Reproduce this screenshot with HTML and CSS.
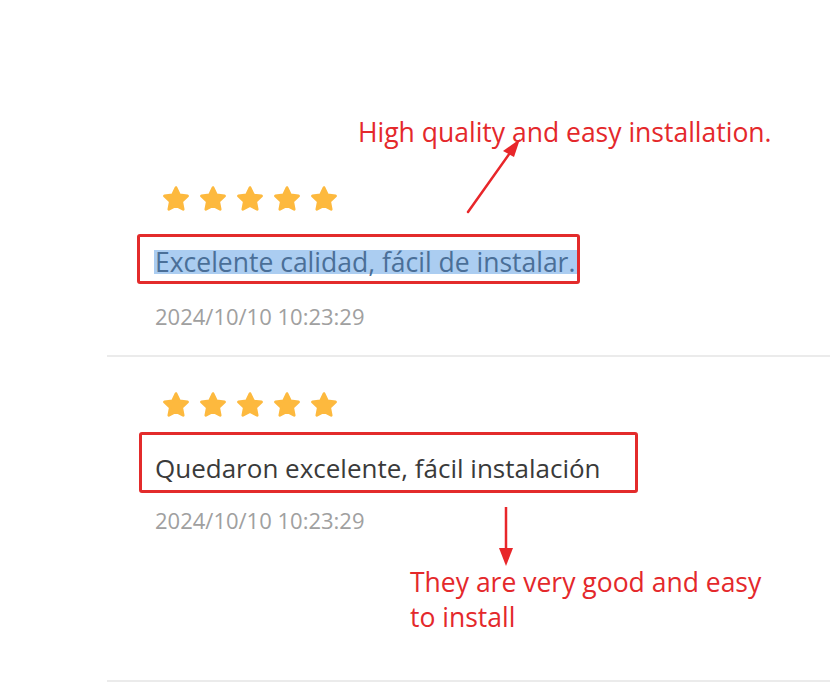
FILE: index.html
```html
<!DOCTYPE html>
<html>
<head>
<meta charset="utf-8">
<link rel="stylesheet" href="styles.css">
</head>
<body>
<div class="page">
  <div class="list">
    <div class="review first">
      <div class="stars">
        <svg class="star" viewBox="1.5 1.5 21 20.5"><path d="M12 2.5l2.9 6 6.4.8-4.7 4.4 1.2 6.4L12 17l-5.8 3.1 1.2-6.4L2.7 9.3l6.4-.8z"/></svg>
        <svg class="star" viewBox="1.5 1.5 21 20.5"><path d="M12 2.5l2.9 6 6.4.8-4.7 4.4 1.2 6.4L12 17l-5.8 3.1 1.2-6.4L2.7 9.3l6.4-.8z"/></svg>
        <svg class="star" viewBox="1.5 1.5 21 20.5"><path d="M12 2.5l2.9 6 6.4.8-4.7 4.4 1.2 6.4L12 17l-5.8 3.1 1.2-6.4L2.7 9.3l6.4-.8z"/></svg>
        <svg class="star" viewBox="1.5 1.5 21 20.5"><path d="M12 2.5l2.9 6 6.4.8-4.7 4.4 1.2 6.4L12 17l-5.8 3.1 1.2-6.4L2.7 9.3l6.4-.8z"/></svg>
        <svg class="star" viewBox="1.5 1.5 21 20.5"><path d="M12 2.5l2.9 6 6.4.8-4.7 4.4 1.2 6.4L12 17l-5.8 3.1 1.2-6.4L2.7 9.3l6.4-.8z"/></svg>
      </div>
      <p class="comment"><span class="selected">Excelente calidad, fácil de instalar.</span></p>
      <p class="date">2024/10/10 10:23:29</p>
    </div>
    <div class="review second">
      <div class="stars">
        <svg class="star" viewBox="1.5 1.5 21 20.5"><path d="M12 2.5l2.9 6 6.4.8-4.7 4.4 1.2 6.4L12 17l-5.8 3.1 1.2-6.4L2.7 9.3l6.4-.8z"/></svg>
        <svg class="star" viewBox="1.5 1.5 21 20.5"><path d="M12 2.5l2.9 6 6.4.8-4.7 4.4 1.2 6.4L12 17l-5.8 3.1 1.2-6.4L2.7 9.3l6.4-.8z"/></svg>
        <svg class="star" viewBox="1.5 1.5 21 20.5"><path d="M12 2.5l2.9 6 6.4.8-4.7 4.4 1.2 6.4L12 17l-5.8 3.1 1.2-6.4L2.7 9.3l6.4-.8z"/></svg>
        <svg class="star" viewBox="1.5 1.5 21 20.5"><path d="M12 2.5l2.9 6 6.4.8-4.7 4.4 1.2 6.4L12 17l-5.8 3.1 1.2-6.4L2.7 9.3l6.4-.8z"/></svg>
        <svg class="star" viewBox="1.5 1.5 21 20.5"><path d="M12 2.5l2.9 6 6.4.8-4.7 4.4 1.2 6.4L12 17l-5.8 3.1 1.2-6.4L2.7 9.3l6.4-.8z"/></svg>
      </div>
      <p class="comment">Quedaron excelente, fácil instalación</p>
      <p class="date">2024/10/10 10:23:29</p>
    </div>
  </div>

  <div class="mark box1"></div>
  <div class="mark box2"></div>
  <p class="note note1">High quality and easy installation.</p>
  <p class="note note2">They are very good and easy<br>to install</p>
  <svg class="arrows" width="830" height="684" viewBox="0 0 830 684">
    <path d="M468 212 L512 150" stroke="#e8262a" stroke-width="2.5" fill="none" stroke-linecap="round"/>
    <path d="M520 139 L503 151 L514 157 Z" fill="#e8262a"/>
    <path d="M506 507 L506 552" stroke="#e8262a" stroke-width="2.5" fill="none"/>
    <path d="M499 548 L513 548 L506 566 Z" fill="#e8262a"/>
  </svg>
</div>
</body>
</html>
```

FILE: styles.css
```css
* { box-sizing: border-box; }
html, body {
  margin: 0;
  padding: 0;
  background: #fff;
}
.page {
  position: relative;
  width: 830px;
  height: 684px;
  overflow: hidden;
  font-family: "Open Sans", "Noto Sans", sans-serif;
}
.list {
  padding-top: 186px;
  margin-left: 107px;
}
.review {
  padding: 0 0 25px 48px;
  border-bottom: 2px solid #ebebeb;
}
.review.second {
  padding-top: 35px;
  padding-bottom: 146px;
}
.stars {
  display: flex;
  gap: 11px;
  margin-left: 8px;
  height: 26px;
}
.star {
  width: 26px;
  height: 26px;
  fill: #fdb93e;
  stroke: #fdb93e;
  stroke-width: 2.2;
  stroke-linejoin: round;
}
.comment {
  margin: 34px 0 0;
  font-size: 26px;
  line-height: 32px;
  color: #3a3a3a;
}
.first .comment {
  margin-top: 38px;
  font-size: 26.5px;
  line-height: 24px;
}
.selected {
  display: inline-block;
  line-height: 24px;
  height: 24px;
  background: #abcdf1;
  color: #4a6f98;
  padding-right: 2px;
  margin-left: -1px;
  padding-left: 1px;
}
.date {
  margin: 22px 0 0;
  font-size: 22px;
  line-height: 28px;
  color: #a0a0a0;
}
.first .date { margin-top: 28px; }
.mark {
  position: absolute;
  border: 3px solid #e32b2b;
  border-radius: 3px;
}
.box1 { left: 137px; top: 234px; width: 443px; height: 50px; }
.box2 { left: 139px; top: 432px; width: 499px; height: 61px; }
.note {
  position: absolute;
  margin: 0;
  color: #e4282b;
  font-size: 26.5px;
  line-height: 35px;
  font-family: "Open Sans", "Noto Sans", sans-serif;
}
.note1 { left: 358px; top: 115px; }
.note2 { left: 410px; top: 565px; }
.arrows {
  position: absolute;
  left: 0;
  top: 0;
}
```
